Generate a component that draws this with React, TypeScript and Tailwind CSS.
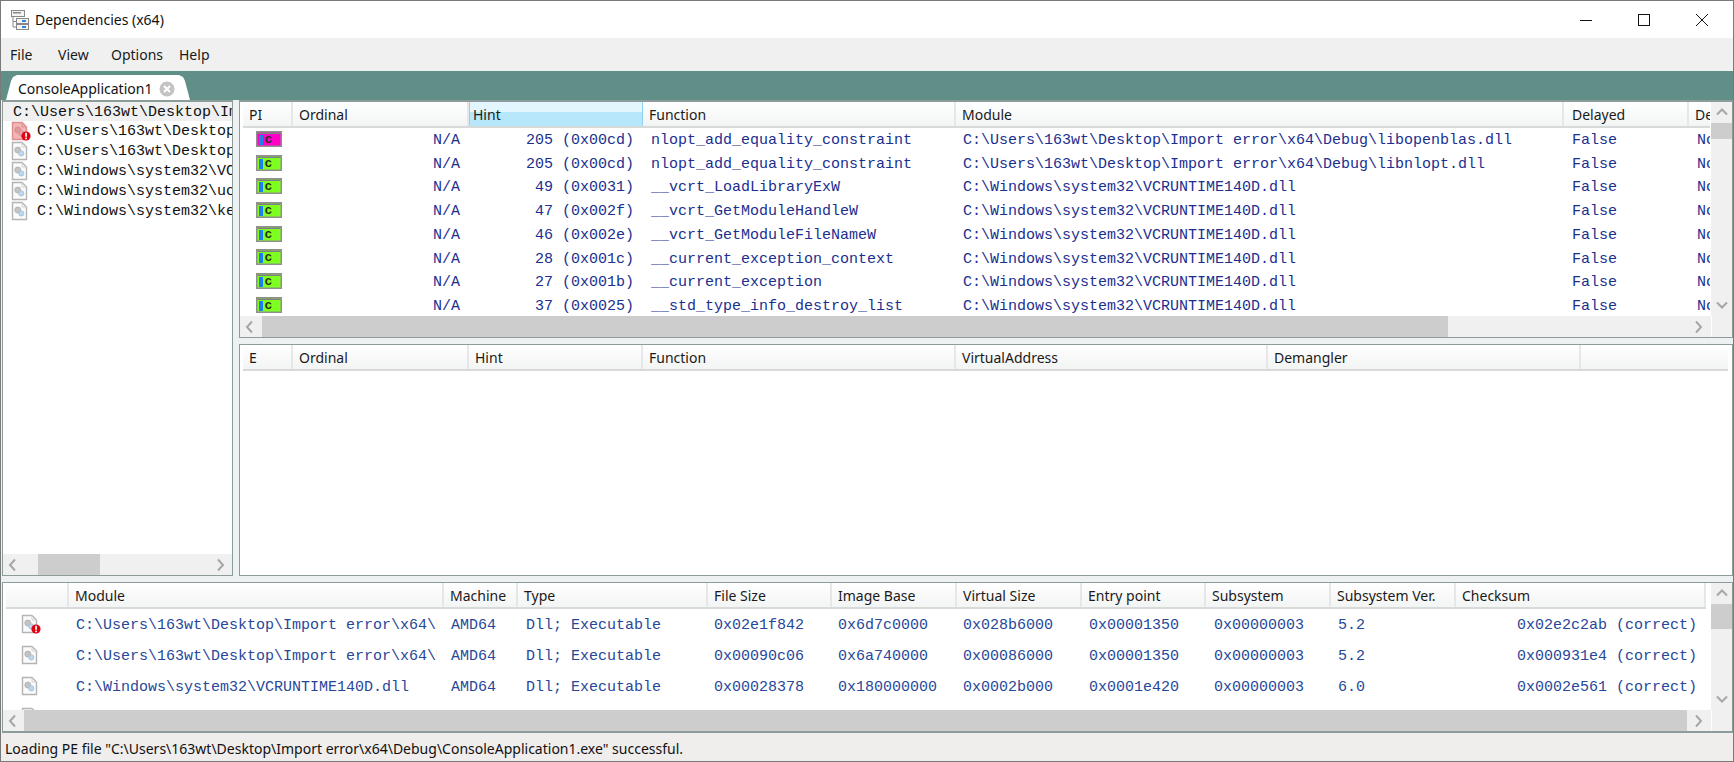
const mono = "font-['Liberation_Mono',monospace] text-[15px] whitespace-pre";
const ui = "font-['Noto_Sans',sans-serif] text-[14px]";

function Chevron({ dir }: { dir: "up" | "down" | "left" | "right" }) {
  const pts = {
    up: "2,8 7,3 12,8",
    down: "2,3 7,8 12,3",
    left: "8,1 3,6.5 8,12",
    right: "3,1 8,6.5 3,12",
  }[dir];
  return (
    <svg width="14" height="14" viewBox="0 0 14 13" className="block">
      <polyline points={pts} fill="none" stroke="#a6a6a6" strokeWidth="2" />
    </svg>
  );
}

function DocIcon({ error = false, dim = false }: { error?: boolean; dim?: boolean }) {
  return (
    <svg width="20" height="20" viewBox="0 0 20 20" className="block shrink-0">
      <path d="M1.5 1.5H11L15.5 6V18.5H1.5Z" fill={dim ? "#f5b5b5" : "#fbfbfb"} stroke={dim ? "#dc8f8f" : "#b4b4b4"} strokeWidth="1.4" />
      <path d="M11 1.5V6H15.5" fill="none" stroke={dim ? "#dc8f8f" : "#d0d0d0"} />
      <circle cx="6.8" cy="9" r="3" fill={dim ? "#e09a9a" : "#c4c4c4"} stroke={dim ? "#cf8a8a" : "#adadad"} strokeWidth="0.8" />
      <circle cx="10.3" cy="12.4" r="2.6" fill={dim ? "#e4a5b5" : "#bcd8f0"} stroke={dim ? "#cf8a8a" : "#a0bcd4"} strokeWidth="0.8" />
      {error && (
        <g>
          <circle cx="15" cy="15" r="4.6" fill="#e3000f" />
          <rect x="14.2" y="11.8" width="1.7" height="4" fill="#fff" />
          <rect x="14.2" y="16.6" width="1.7" height="1.6" fill="#fff" />
        </g>
      )}
    </svg>
  );
}

function PiIcon({ fill }: { fill: string }) {
  return (
    <svg width="26" height="16" viewBox="0 0 26 16" className="block">
      <rect x="0.75" y="0.75" width="24.5" height="14.5" fill={fill} stroke="#8f8f8f" strokeWidth="1.5" />
      <rect x="1.5" y="1.5" width="23" height="1.5" fill="#808080" />
      <rect x="3" y="4" width="4" height="10" fill="#1f7fe8" />
      <text x="8.5" y="12" fontFamily="Liberation Mono, monospace" fontWeight="700" fontSize="13" fill="#26301a">c</text>
    </svg>
  );
}

function AppIcon() {
  return (
    <svg width="20" height="20" viewBox="0 0 20 20" className="block">
      <rect x="1.5" y="0.5" width="13" height="6" fill="#f4f4f4" stroke="#888" />
      <rect x="3" y="2" width="8" height="1.5" fill="#888" />
      <path d="M3 6.5V17H6M3 11.5H6" fill="none" stroke="#888" />
      <rect x="6.5" y="8.5" width="12" height="5" fill="#f4f4f4" stroke="#888" />
      <rect x="12" y="10" width="4" height="2" fill="#2f86d8" />
      <rect x="6.5" y="14.5" width="12" height="5" fill="#f4f4f4" stroke="#888" />
      <rect x="12" y="16" width="4" height="2" fill="#2f86d8" />
    </svg>
  );
}

type Col = { label: string; w: string; active?: boolean; extra?: string };

function Header({ cols }: { cols: Col[] }) {
  return (
    <div className={`flex h-[26px] shrink-0 overflow-hidden border-b-2 border-[#d8dada] bg-gradient-to-b from-white to-[#f3f4f4] text-[#1a1a1a] ${ui}`}>
      {cols.map((c) => (
        <div
          key={c.label + c.w}
          className={
            c.active
              ? `${c.w} shrink-0 border-x border-[#8fd3f0] bg-gradient-to-b from-[#e3f6fd] from-40% to-[#b7e7fb] to-40% pl-[3px] leading-[25px]`
              : `${c.w} shrink-0 border-r-2 border-[#e6e8e8] pl-[6px] leading-[25px] ${c.extra ?? ""}`
          }
        >
          {c.label}
        </div>
      ))}
    </div>
  );
}

function VBar({ thumb }: { thumb: string }) {
  return (
    <div className="flex w-[21px] shrink-0 flex-col bg-[#f0f0f0]">
      <div className="flex h-[21px] shrink-0 items-center justify-center"><Chevron dir="up" /></div>
      <div className={`${thumb} shrink-0 bg-[#cdcdcd]`} />
      <div className="flex-1" />
      <div className="flex h-[21px] shrink-0 items-center justify-center"><Chevron dir="down" /></div>
    </div>
  );
}

function Arrow({ dir }: { dir: "left" | "right" }) {
  return <div className="flex h-full w-[21px] shrink-0 items-center justify-center bg-[#f0f0f0]"><Chevron dir={dir} /></div>;
}

function HBarWide({ thumb }: { thumb: string }) {
  return (
    <div className="flex h-[21px] shrink-0 bg-[#f0f0f0]">
      <Arrow dir="left" />
      <div className={`${thumb} shrink-0 bg-[#cdcdcd]`} />
      <div className="flex-1" />
      <Arrow dir="right" />
      <div className="ml-[1px] w-[21px] shrink-0 border-l border-white bg-[#f0f0f0]" />
    </div>
  );
}

const topCols: Col[] = [
  { label: "PI", w: "w-[50px]" },
  { label: "Ordinal", w: "w-[176px]" },
  { label: "Hint", w: "w-[174px]", active: true },
  { label: "Function", w: "w-[313px]" },
  { label: "Module", w: "w-[608px]" },
  { label: "Delayed", w: "w-[125px]", extra: "!pl-[8px]" },
  { label: "Demangler", w: "w-[60px]" },
];

const topRows = [
  ["205 (0x00cd)", "nlopt_add_equality_constraint", "C:\\Users\\163wt\\Desktop\\Import error\\x64\\Debug\\libopenblas.dll", true],
  ["205 (0x00cd)", "nlopt_add_equality_constraint", "C:\\Users\\163wt\\Desktop\\Import error\\x64\\Debug\\libnlopt.dll", false],
  [" 49 (0x0031)", "__vcrt_LoadLibraryExW", "C:\\Windows\\system32\\VCRUNTIME140D.dll", false],
  [" 47 (0x002f)", "__vcrt_GetModuleHandleW", "C:\\Windows\\system32\\VCRUNTIME140D.dll", false],
  [" 46 (0x002e)", "__vcrt_GetModuleFileNameW", "C:\\Windows\\system32\\VCRUNTIME140D.dll", false],
  [" 28 (0x001c)", "__current_exception_context", "C:\\Windows\\system32\\VCRUNTIME140D.dll", false],
  [" 27 (0x001b)", "__current_exception", "C:\\Windows\\system32\\VCRUNTIME140D.dll", false],
  [" 37 (0x0025)", "__std_type_info_destroy_list", "C:\\Windows\\system32\\VCRUNTIME140D.dll", false],
] as const;

const midCols: Col[] = [
  { label: "E", w: "w-[50px]" },
  { label: "Ordinal", w: "w-[176px]" },
  { label: "Hint", w: "w-[174px]" },
  { label: "Function", w: "w-[313px]" },
  { label: "VirtualAddress", w: "w-[312px]" },
  { label: "Demangler", w: "w-[313px]" },
  { label: "", w: "w-[147px]", extra: "!border-r-0" },
];

const botCols: Col[] = [
  { label: "", w: "w-[63px]" },
  { label: "Module", w: "w-[375px]" },
  { label: "Machine", w: "w-[74px]" },
  { label: "Type", w: "w-[190px]" },
  { label: "File Size", w: "w-[124px]" },
  { label: "Image Base", w: "w-[125px]" },
  { label: "Virtual Size", w: "w-[125px]" },
  { label: "Entry point", w: "w-[124px]" },
  { label: "Subsystem", w: "w-[125px]" },
  { label: "Subsystem Ver.", w: "w-[125px]" },
  { label: "Checksum", w: "w-[250px]" },
];

const botRows = [
  { err: true, mod: "C:\\Users\\163wt\\Desktop\\Import error\\x64\\Debug\\libopenblas.dll", fs: "0x02e1f842", ib: "0x6d7c0000", vs: "0x028b6000", ep: "0x00001350", ver: "5.2", ck: "0x02e2c2ab (correct)" },
  { err: false, mod: "C:\\Users\\163wt\\Desktop\\Import error\\x64\\Debug\\libnlopt.dll", fs: "0x00090c06", ib: "0x6a740000", vs: "0x00086000", ep: "0x00001350", ver: "5.2", ck: "0x000931e4 (correct)" },
  { err: false, mod: "C:\\Windows\\system32\\VCRUNTIME140D.dll", fs: "0x00028378", ib: "0x180000000", vs: "0x0002b000", ep: "0x0001e420", ver: "6.0", ck: "0x0002e561 (correct)" },
  { err: false, mod: "", fs: "", ib: "", vs: "", ep: "", ver: "", ck: "" },
];

const tree = [
  "C:\\Users\\163wt\\Desktop\\Import error\\x64\\Debug\\libopenblas.dll",
  "C:\\Users\\163wt\\Desktop\\Import error\\x64\\Debug\\libnlopt.dll",
  "C:\\Windows\\system32\\VCRUNTIME140D.dll",
  "C:\\Windows\\system32\\ucrtbased.dll",
  "C:\\Windows\\system32\\kernel32.dll",
];

const pane = "border border-[#8c9c9a] bg-white";
const navy = "text-[#1b2f8f]";

export default function App() {
  return (
    <div className="flex h-[762px] w-[1734px] flex-col overflow-hidden border border-[#7a7a7a] bg-white">
      {/* title bar */}
      <div className="flex h-[37px] shrink-0 items-center bg-white">
        <div className="ml-[9px] mr-[5px]"><AppIcon /></div>
        <div className={`${ui} text-[14.6px] text-[#111]`}>Dependencies (x64)</div>
        <div className="ml-auto flex h-full items-center">
          <svg width="130" height="14" viewBox="0 0 130 14" className="mr-[24px] block">
            <line x1="1" y1="7.5" x2="13" y2="7.5" stroke="#111" />
            <rect x="59.5" y="1.5" width="11" height="11" fill="none" stroke="#111" />
            <path d="M117 1L129 13M129 1L117 13" stroke="#111" fill="none" />
          </svg>
        </div>
      </div>

      {/* menu */}
      <div className={`flex h-[33px] shrink-0 items-center bg-[#f0f0f0] text-[#1a1a1a] ${ui}`}>
        <span className="ml-[9px] w-[48px]">File</span>
        <span className="w-[53px]">View</span>
        <span className="w-[68px]">Options</span>
        <span>Help</span>
      </div>

      {/* tab strip */}
      <div className="flex h-[29px] shrink-0 items-end bg-[#5f8f87] pl-[5px]">
        <div className={`flex h-[25px] w-[184px] items-center bg-white pl-[12px] pt-[2px] text-[#111] [clip-path:polygon(0_100%,5px_6px,7px_2px,11px_0,173px_0,177px_2px,179px_6px,184px_100%)] ${ui}`}>
          <span>ConsoleApplication1</span>
          <svg width="16" height="16" viewBox="0 0 16 16" className="ml-auto mr-[15px] block">
            <circle cx="8" cy="8" r="7.5" fill="#c4c4c4" />
            <path d="M5 5L11 11M11 5L5 11" stroke="#fff" strokeWidth="2" />
          </svg>
        </div>
      </div>

      {/* workspace */}
      <div className="flex h-[633px] shrink-0 flex-col bg-[#eef1f1] pl-[1px]">
        <div className="flex h-[476px] shrink-0">
          {/* tree */}
          <div className={`flex w-[231px] shrink-0 flex-col overflow-hidden border-t-2 ${pane}`}>
            <div className="min-h-0 flex-1 overflow-hidden">
              <div className={`h-[19px] overflow-hidden bg-[#f0f0f0] pl-[10px] leading-[22px] text-[#111] ${mono}`}>C:\Users\163wt\Desktop\Import error\x64\Debug\ConsoleApplication1.exe</div>
              {tree.map((t, i) => (
                <div key={t} className="flex h-[20px] items-center pl-[8px]">
                  <DocIcon error={i === 0} dim={i === 0} />
                  <span className={`ml-[6px] pt-[2px] text-[#111] ${mono}`}>{t}</span>
                </div>
              ))}
            </div>
            <div className="flex h-[21px] shrink-0 bg-[#f0f0f0]">
              <Arrow dir="left" />
              <div className="ml-[14px] w-[62px] shrink-0 bg-[#cdcdcd]" />
              <div className="flex-1" />
              <Arrow dir="right" />
            </div>
          </div>

          <div className="w-[6px] shrink-0" />

          {/* right column */}
          <div className="flex min-w-0 flex-1 flex-col">
            <div className={`flex h-[238px] shrink-0 flex-col overflow-hidden border-t-2 ${pane}`}>
              <div className="flex min-h-0 flex-1">
                <div className="min-w-0 flex-1 overflow-hidden pl-[3px]">
                  <div className="w-[1467px] overflow-hidden">
                    <Header cols={topCols} />
                    {topRows.map((r, i) => (
                      <div key={i} className={`flex h-[23.7px] items-center overflow-hidden pt-[3px] ${navy} ${mono}`}>
                        <div className="mb-[5px] flex w-[50px] shrink-0 justify-center pl-[1px]">
                          <PiIcon fill={r[3] ? "#ff00c8" : "#7fff1f"} />
                        </div>
                        <div className="w-[176px] shrink-0 pr-[9px] text-right">N/A</div>
                        <div className="w-[174px] shrink-0 pr-[9px] text-right">{r[0]}</div>
                        <div className="w-[313px] shrink-0 pl-[8px]">{r[1]}</div>
                        <div className="w-[608px] shrink-0 pl-[7px]">{r[2]}</div>
                        <div className="w-[125px] shrink-0 pl-[8px]">False</div>
                        <div className="w-[21px] shrink-0 overflow-hidden pl-[8px]">No</div>
                      </div>
                    ))}
                  </div>
                </div>
                <VBar thumb="h-[16px]" />
              </div>
              <HBarWide thumb="ml-[1px] w-[1186px]" />
            </div>

            <div className="h-[6px] shrink-0" />

            <div className={`flex min-h-0 flex-1 flex-col overflow-hidden pl-[3px] ${pane}`}>
              <div className="w-[1485px]">
                <Header cols={midCols} />
              </div>
            </div>
          </div>
        </div>

        <div className="h-[6px] shrink-0" />

        {/* modules */}
        <div className={`flex h-[151px] shrink-0 flex-col overflow-hidden border-b-2 ${pane}`}>
          <div className="flex min-h-0 flex-1">
            <div className="min-w-0 flex-1 overflow-hidden">
              <div className="ml-[3px] w-[1700px] overflow-hidden">
                <Header cols={botCols} />
              </div>
              {botRows.map((r, i) => (
                <div key={i} className={`flex h-[31px] items-center overflow-hidden pt-[3px] text-[#27479a] ${mono}`}>
                  <div className="mb-[4px] w-[66px] shrink-0 pl-[18px]"><DocIcon error={r.err} /></div>
                  <div className="w-[368px] shrink-0 overflow-hidden pl-[7px]">{r.mod}</div>
                  <div className="w-[7px] shrink-0" />
                  <div className="w-[74px] shrink-0 pl-[7px]">{r.mod ? "AMD64" : ""}</div>
                  <div className="w-[190px] shrink-0 pl-[8px]">{r.mod ? "Dll; Executable" : ""}</div>
                  <div className="w-[124px] shrink-0 pl-[6px]">{r.fs}</div>
                  <div className="w-[125px] shrink-0 pl-[6px]">{r.ib}</div>
                  <div className="w-[125px] shrink-0 pl-[6px]">{r.vs}</div>
                  <div className="w-[124px] shrink-0 pl-[7px]">{r.ep}</div>
                  <div className="w-[125px] shrink-0 pl-[8px]">{r.mod ? "0x00000003" : ""}</div>
                  <div className="w-[125px] shrink-0 pl-[7px]">{r.ver}</div>
                  <div className="w-[241px] shrink-0 text-right">{r.ck}</div>
                </div>
              ))}
            </div>
            <VBar thumb="h-[25px]" />
          </div>
          <div className="flex h-[21px] shrink-0 bg-[#f0f0f0]">
            <Arrow dir="left" />
            <div className="w-[1663px] shrink-0 bg-[#cdcdcd]" />
            <div className="flex-1" />
            <Arrow dir="right" />
            <div className="ml-[1px] w-[21px] shrink-0 border-l border-white bg-[#f0f0f0]" />
          </div>
        </div>
      </div>

      {/* status bar */}
      <div className={`flex h-[28px] shrink-0 items-center bg-[#f0eded] pl-[4px] pt-[2px] text-[14.1px] text-[#111] ${ui}`}>
        Loading PE file "C:\Users\163wt\Desktop\Import error\x64\Debug\ConsoleApplication1.exe" successful.
      </div>
    </div>
  );
}
